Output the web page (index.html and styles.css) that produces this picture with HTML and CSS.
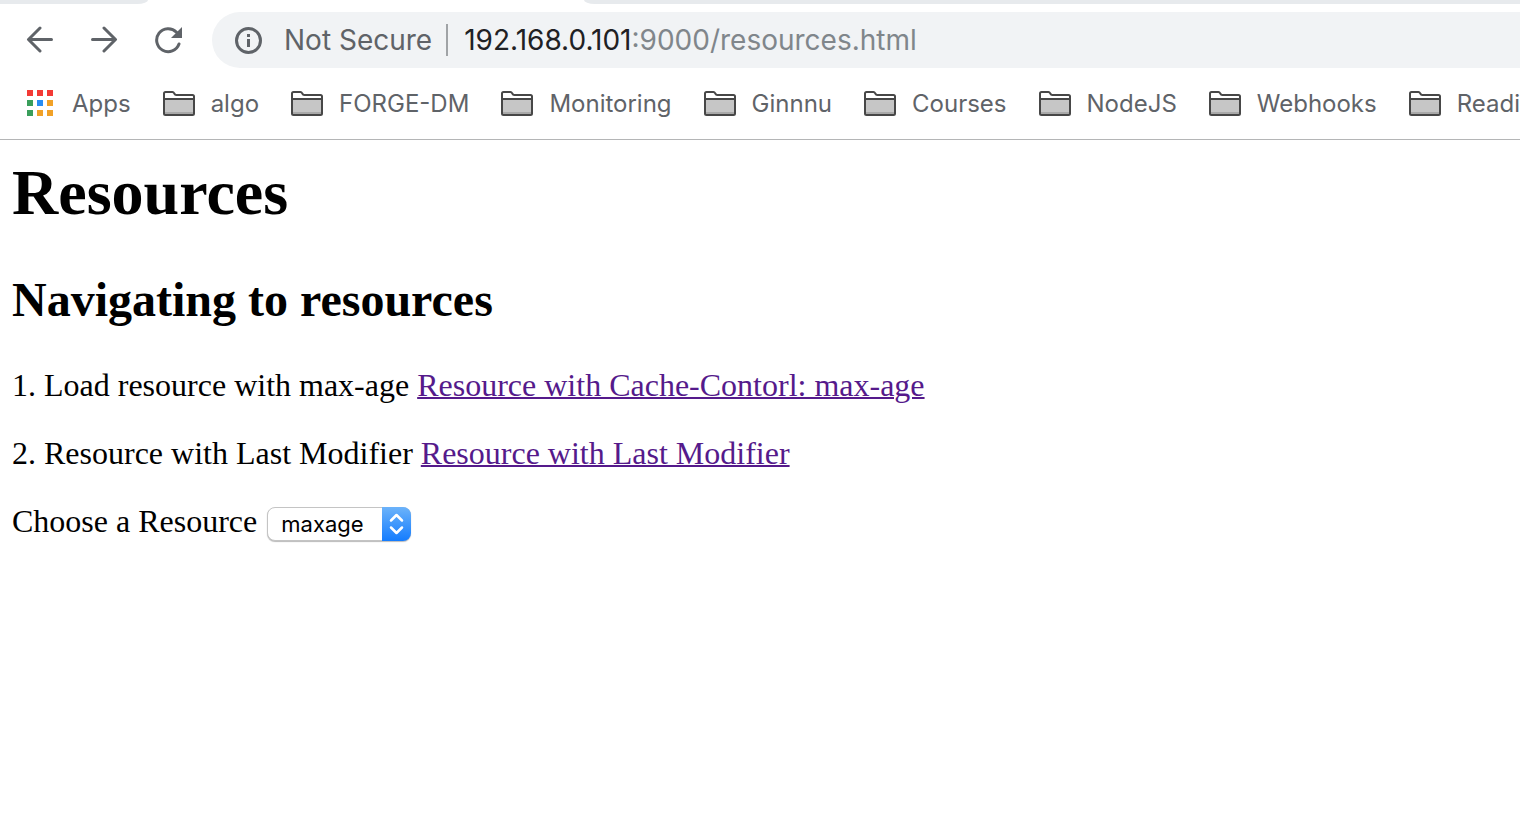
FILE: index.html
```html
<!DOCTYPE html>
<html lang="en">
<head>
<meta charset="utf-8">
<title>Resources</title>
<link rel="stylesheet" href="styles.css">
</head>
<body>
<svg class="defs" aria-hidden="true">
  <symbol id="folder" viewBox="0 -1 32 26">
    <path d="M1 7V2.500Q1 1 2.500 1H9.500Q10.500 1 11 2L12 3.500Q12.500 4 13.500 4H29.500Q31 4 31 5.500V8" fill="#fff" stroke="#474747" stroke-width="2"/>
    <path d="M1 8H31V22.500Q31 24 29.500 24H2.500Q1 24 1 22.500Z" fill="#c6c6c6"/>
    <path d="M2 21H30V23H2Z" fill="#a9a9a9"/>
    <path d="M1 8H31V22.500Q31 24 29.500 24H2.500Q1 24 1 22.500Z" fill="none" stroke="#474747" stroke-width="2"/>
  </symbol>
</svg>
<header class="browser">
  <div class="tabstrip"><div class="tab-before"></div><div class="tab-active"></div><div class="tab-after"></div></div>
  <div class="toolbar">
    <div class="nav">
      <button class="nav-button" type="button" aria-label="Back">
        <svg width="28" height="28" viewBox="0 0 28 28" fill="none" stroke="#5f6368" stroke-width="3" stroke-linecap="round" stroke-linejoin="round"><path d="M25.500 13.500H3M14 2L2.500 13.500L14 25"/></svg>
      </button>
      <button class="nav-button" type="button" aria-label="Forward">
        <svg width="28" height="28" viewBox="0 0 28 28" fill="none" stroke="#5f6368" stroke-width="3" stroke-linecap="round" stroke-linejoin="round"><path d="M2.500 13.500H25M14 2L25.500 13.500L14 25"/></svg>
      </button>
      <button class="nav-button" type="button" aria-label="Reload">
        <svg width="28" height="28" viewBox="0 0 28 28"><path d="M25 18A11.500 11.500 0 1 1 22.500 6.200" fill="none" stroke="#5f6368" stroke-width="3" stroke-linecap="round"/><path d="M28 1V12H17Z" fill="#5f6368"/></svg>
      </button>
    </div>
    <div class="address">
      <svg class="info" width="28" height="28" viewBox="0 0 28 28"><circle cx="14.500" cy="14.500" r="12" fill="none" stroke="#5f6368" stroke-width="3"/><path d="M13 8H16V11H13ZM13 13H16V21H13Z" fill="#5f6368"/></svg>
      <span class="security">Not Secure</span>
      <span class="url"><span class="host">192.168.0.101</span>:9000/resources.html</span>
    </div>
  </div>
  <nav class="bookmarks" aria-label="Bookmarks">
    <a class="bookmark apps" href="#"><svg width="26" height="26" viewBox="0 0 26 26"><path fill="#f33a35" d="M0 0h6v6H0zM10 0h6v6h-6zM20 0h6v6h-6z"/><path fill="#3a9e5b" d="M0 10h6v6H0zM0 20h6v6H0z"/><path fill="#278df5" d="M10 10h6v6h-6z"/><path fill="#f1a127" d="M20 10h6v6h-6zM10 20h6v6h-6zM20 20h6v6h-6z"/></svg>Apps</a>
    <a class="bookmark" href="#"><svg width="32" height="26"><use href="#folder"/></svg>algo</a>
    <a class="bookmark" href="#"><svg width="32" height="26"><use href="#folder"/></svg>FORGE-DM</a>
    <a class="bookmark" href="#"><svg width="32" height="26"><use href="#folder"/></svg>Monitoring</a>
    <a class="bookmark" href="#"><svg width="32" height="26"><use href="#folder"/></svg>Ginnnu</a>
    <a class="bookmark" href="#"><svg width="32" height="26"><use href="#folder"/></svg>Courses</a>
    <a class="bookmark" href="#"><svg width="32" height="26"><use href="#folder"/></svg>NodeJS</a>
    <a class="bookmark" href="#"><svg width="32" height="26"><use href="#folder"/></svg>Webhooks</a>
    <a class="bookmark" href="#"><svg width="32" height="26"><use href="#folder"/></svg>Readi</a>
  </nav>
</header>
<main class="page">
  <h1 class="title">Resources</h1>
  <h2 class="subtitle">Navigating to resources</h2>
  <p class="line">1. Load resource with max-age <a class="link" href="#">Resource with Cache-Contorl: max-age</a></p>
  <p class="line">2. Resource with Last Modifier <a class="link" href="#">Resource with Last Modifier</a></p>
  <div class="line chooser">
    <label for="resource">Choose a Resource</label>
    <div class="picker">
      <select id="resource" class="select"><option>maxage</option></select>
      <svg class="arrows" width="29" height="34" viewBox="0 0 29 34" fill="none" stroke="#fff" stroke-width="2.500" stroke-linecap="round" stroke-linejoin="round"><path d="M9 13.500L14.500 8L20 13.500M9 20.500L14.500 26L20 20.500"/></svg>
    </div>
  </div>
</main>
</body>
</html>
```
FILE: styles.css
```css
* { box-sizing: border-box; }
body { margin: 0; background: #fff; color: #000; overflow-x: hidden; }
.defs { display: none; }
.browser { font-family: Inter, "Liberation Sans", sans-serif; color: #5f6368; border-bottom: 1px solid #b4b5b6; overflow: hidden; }
.tabstrip { display: flex; height: 4px; overflow: hidden; }
.tab-before { width: 148px; background: #e7eaed; border-bottom-right-radius: 16px 6px; }
.tab-active { width: 436px; }
.tab-after { flex: 1; background: #e7eaed; border-bottom-left-radius: 16px 6px; }
.toolbar { display: flex; align-items: center; padding: 8px 0 8px 26px; }
.nav { display: flex; gap: 36px; margin-right: 30px; }
.nav-button { display: flex; padding: 0; border: 0; background: none; }
.address { display: flex; align-items: center; flex: 1; height: 56px; padding-left: 22px; background: #f1f3f5; border-radius: 28px 0 0 28px; font-size: 28px; line-height: 32px; white-space: nowrap; }
.security { margin-left: 22px; padding-right: 14px; border-right: 2px solid #a0a3a6; }
.url { margin-left: 16px; color: #80868b; }
.host { color: #202124; }
.bookmarks { display: flex; align-items: center; gap: 32px; height: 63px; padding: 0 0 9px 27px; font-size: 24px; white-space: nowrap; }
.bookmark { display: flex; align-items: center; flex: none; gap: 16px; color: inherit; text-decoration: none; }
.apps { gap: 19px; }
.page { padding: 17px 12px; font-family: "Liberation Serif", "Times New Roman", serif; font-size: 32px; line-height: 36px; }
.title { margin: 0 0 43px; font-size: 64px; line-height: 72px; }
.subtitle { margin: 0 0 39px; font-size: 48px; line-height: 56px; }
.line { margin: 0 0 32px; }
.link { color: #551a8b; text-decoration-thickness: 2px; }
.chooser { display: flex; gap: 10px; }
.picker { position: relative; margin-top: 4px; }
.select { display: block; appearance: none; height: 34px; width: 144px; padding: 0 32px 0 13px; border: 1px solid #c4c4c4; border-radius: 8px; background: #fff; color: #000; font-family: Inter, "Liberation Sans", sans-serif; font-size: 22px; box-shadow: 0 1px 1px #bbb; }
.arrows { position: absolute; top: 0; right: 0; border-radius: 0 8px 8px 0; background: linear-gradient(#6cb3fa, #147cfe); pointer-events: none; }
```
